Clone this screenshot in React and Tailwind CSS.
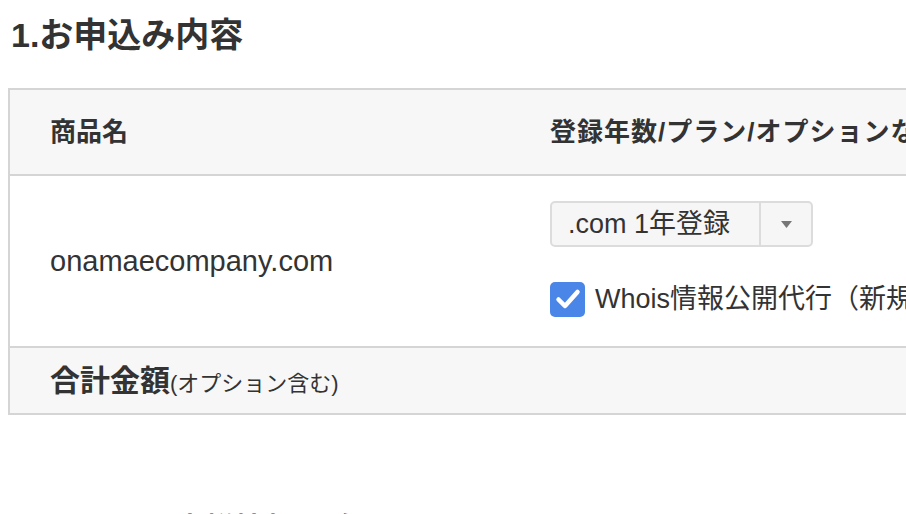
export default function App() {
  const jp = { fontFamily: '"Liberation Sans", "Noto Sans CJK JP", sans-serif' };

  return (
    <div className="w-[906px] h-[514px] overflow-hidden bg-white text-[#333]" style={jp}>
      <h2 className="pl-[11px] pt-[14px] text-[34px] font-bold leading-[42px]">1.お申込み内容</h2>

      <div className="ml-[8px] mt-[32px] w-[1200px] border-2 border-[#d5d5d5]">
        {/* header */}
        <div className="flex h-[86px] items-center bg-[#f7f7f7] border-b-2 border-[#d5d5d5]">
          <div className="w-[500px] pl-[40px] text-[26px] font-bold">商品名</div>
          <div className="pl-[40px] text-[26px] font-bold tracking-[1px] whitespace-nowrap">登録年数/プラン/オプションなど</div>
        </div>

        {/* body */}
        <div className="flex h-[172px] border-b-2 border-[#d5d5d5]">
          <div className="flex w-[500px] items-center pl-[40px] pt-[2px] text-[29px]">onamaecompany.com</div>
          <div className="pl-[40px] pt-[25px] flex flex-col gap-[32px]">
            <div className="flex h-[46px] w-[263px] items-stretch rounded-[5px] border-2 border-[#dcdcdc] bg-[#f6f6f6]">
              <div className="flex w-[207px] items-center pl-[16px] text-[27px]">.com 1年登録</div>
              <div className="flex flex-1 items-center justify-center border-l-2 border-[#dcdcdc]">
                <svg width="11" height="7" viewBox="0 0 11 7"><path d="M0 0h11L5.5 7z" fill="#777" /></svg>
              </div>
            </div>
            <div className="flex items-center gap-[10px]">
              <div className="flex h-[35px] w-[35px] shrink-0 items-center justify-center rounded-[5px] bg-[#4a86e8]">
                <svg width="26" height="22" viewBox="0 0 26 22">
                  <path d="M3.5 11.5l6.5 6.5L22.5 4" fill="none" stroke="#fff" strokeWidth="4.5" strokeLinecap="round" strokeLinejoin="round" />
                </svg>
              </div>
              <span className="text-[27px] whitespace-nowrap">Whois情報公開代行（新規登録時のみ無料）</span>
            </div>
          </div>
        </div>

        {/* total */}
        <div className="flex h-[65px] items-center bg-[#f7f7f7]">
          <div className="pl-[40px] flex items-baseline">
            <span className="text-[30px] font-bold">合計金額</span>
            <span className="text-[22px]">(オプション含む)</span>
          </div>
        </div>
      </div>

      <h3 className="mt-[94px] pl-[120px] text-[30px] font-bold leading-[40px]">2.お客様情報の確認</h3>
    </div>
  );
}
